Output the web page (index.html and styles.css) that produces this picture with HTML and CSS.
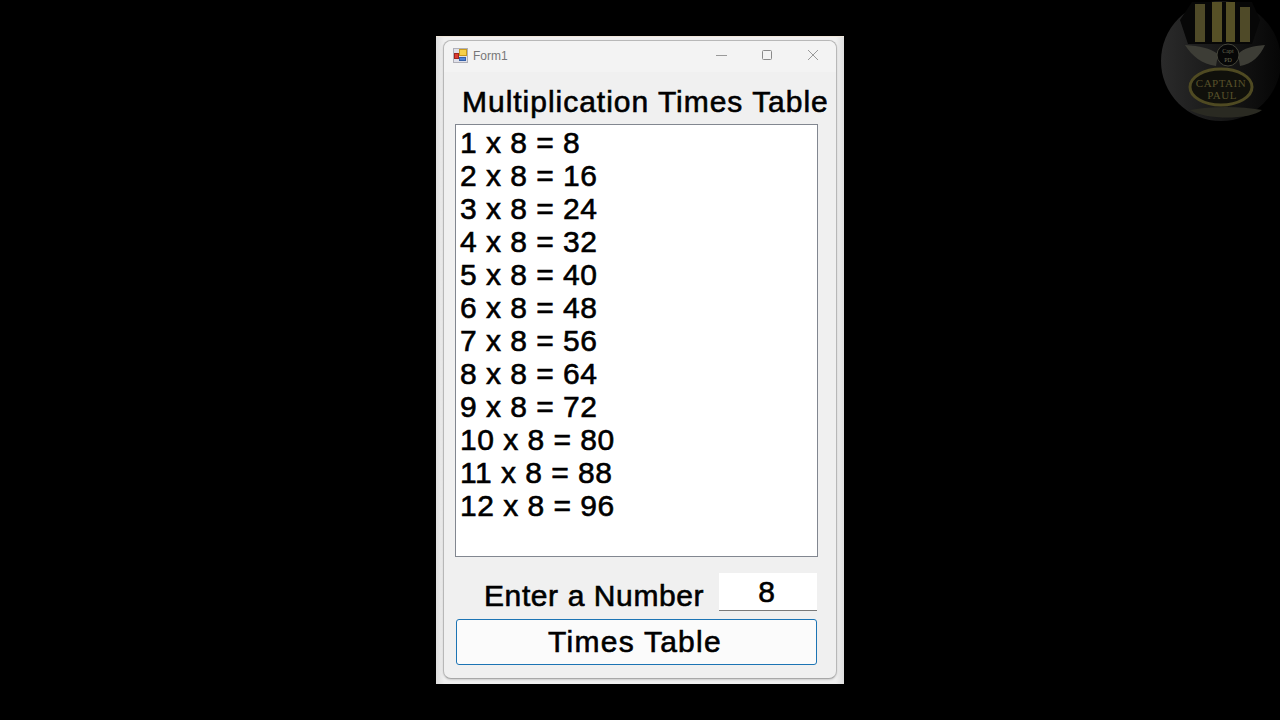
FILE: index.html
```html
<!DOCTYPE html>
<html lang="en">
<head>
    <meta charset="UTF-8">
    <title>Form1</title>
    <link rel="stylesheet" href="styles.css">
</head>
<body>
    <div class="frame">
        <div class="window">
            <div class="titlebar">
                <svg class="app-icon" width="15" height="15" viewBox="0 0 15 15">
                    <rect x="0.5" y="0.5" width="14" height="14" fill="#dfe0ea" stroke="#b0b0b8"/>
                    <rect x="6.5" y="1.5" width="7" height="6" fill="#f6d04a" stroke="#c99a1c"/>
                    <rect x="1.5" y="5.5" width="4" height="5" fill="#dc3a30" stroke="#9c2520"/>
                    <rect x="6.5" y="9.5" width="6" height="3" fill="#4f82d8" stroke="#3560a8"/>
                </svg>
                <span class="title">Form1</span>
                <div class="caption-buttons">
                    <svg width="12" height="12" viewBox="0 0 12 12"><path d="M1 6.5h11" stroke="#999" fill="none"/></svg>
                    <svg width="12" height="12" viewBox="0 0 12 12"><rect x="1.5" y="1.5" width="9" height="9" rx="1" stroke="#8a8a8a" fill="none"/></svg>
                    <svg width="12" height="12" viewBox="0 0 12 12"><path d="M1 1l10 10M11 1L1 11" stroke="#999" fill="none"/></svg>
                </div>
            </div>
            <div class="form-body">
                <div class="heading">Multiplication Times Table</div>
                <div class="listbox">
                    <div>1 x 8 = 8</div>
                    <div>2 x 8 = 16</div>
                    <div>3 x 8 = 24</div>
                    <div>4 x 8 = 32</div>
                    <div>5 x 8 = 40</div>
                    <div>6 x 8 = 48</div>
                    <div>7 x 8 = 56</div>
                    <div>8 x 8 = 64</div>
                    <div>9 x 8 = 72</div>
                    <div>10 x 8 = 80</div>
                    <div>11 x 8 = 88</div>
                    <div>12 x 8 = 96</div>
                </div>
                <div class="input-row">
                    <span class="input-label">Enter a Number</span>
                    <div class="number-box">8</div>
                </div>
                <button class="times-btn">Times Table</button>
            </div>
        </div>
    </div>

    <svg class="logo" width="120" height="122" viewBox="0 0 120 122">
        <defs>
            <linearGradient id="badge" x1="0" y1="0" x2="1" y2="0">
                <stop offset="0" stop-color="#2a2a2a"/>
                <stop offset="0.55" stop-color="#161616"/>
                <stop offset="1" stop-color="#060606"/>
            </linearGradient>
        </defs>
        <circle cx="61" cy="61" r="60" fill="url(#badge)"/>
        <path d="M20 20L32 2H92L100 20L92 44H28Z" fill="#070707"/>
        <rect x="35" y="4" width="10" height="38" fill="#4f4a28"/>
        <rect x="52" y="2" width="10" height="40" fill="#565026"/>
        <rect x="66" y="2" width="9" height="40" fill="#565026"/>
        <rect x="80" y="7" width="10" height="35" fill="#4f4a28"/>
        <path d="M25 45C40 46 50 48 58 54L56 66C42 64 32 56 25 45ZM105 45C92 46 84 48 78 54L80 66C92 64 100 56 105 45Z" fill="#3d3d36"/>
        <circle cx="68" cy="55" r="11" fill="#070707" stroke="#45453a"/>
        <text class="logo-small" x="68" y="53" text-anchor="middle">Capt</text>
        <text class="logo-small" x="68" y="62" text-anchor="middle">PD</text>
        <path d="M30 110C50 106 80 106 102 110C90 120 45 120 30 110Z" fill="#2a2a22"/>
        <ellipse cx="61" cy="87" rx="31" ry="18" fill="#10100b" stroke="#4f4a22" stroke-width="3"/>
        <text class="logo-text" x="61" y="87" text-anchor="middle">CAPTAIN</text>
        <text class="logo-text" x="62" y="99" text-anchor="middle">PAUL</text>
    </svg>
</body>
</html>
```
FILE: styles.css
```css
* {
    margin: 0;
    padding: 0;
    box-sizing: border-box;
}

body {
    background-color: #000;
    height: 720px;
    overflow: hidden;
    font-family: "Liberation Sans", Arial, sans-serif;
    -webkit-text-stroke: 0.6px currentColor;
}

.frame {
    width: 408px;
    height: 648px;
    margin: 36px 0 0 436px;
    padding: 4px 7px 5px 7px;
    background: linear-gradient(to right, #dedede, #f0f0f0 2%, #f0f0f0 98%, #dedede);
    box-shadow: inset 0 1px 0 #efe6da;
}

.window {
    height: 639px;
    background-color: #f0f0f0;
    border: 1px solid #b8b8b8;
    border-bottom-color: #a8a8a8;
    border-radius: 8px;
    box-shadow: 0 1px 2px rgba(0, 0, 0, 0.15);
}

.titlebar {
    display: flex;
    align-items: center;
    height: 31px;
    padding: 0 0 2px 9px;
    background-color: #f3f3f3;
    border-radius: 8px 8px 0 0;
}

.title {
    margin-left: 5px;
    font-size: 12px;
    color: #777;
    -webkit-text-stroke: 0;
}

.caption-buttons {
    display: flex;
    gap: 34px;
    margin: 0 17px 1px auto;
}

.form-body {
    padding: 13px 18px 0 11px;
}

.heading {
    margin-left: 7px;
    margin-right: -20px;
    font-size: 30px;
    letter-spacing: 0.98px;
    line-height: 34px;
    color: #000;
    white-space: nowrap;
}

.listbox {
    height: 433px;
    margin-top: 5px;
    padding: 1px 0 0 4px;
    background-color: #fff;
    border: 1px solid #828790;
    font-size: 30px;
    letter-spacing: 0.48px;
    line-height: 33px;
    color: #000;
}

.input-row {
    display: flex;
    align-items: flex-end;
    height: 38px;
    margin-top: 16px;
}

.input-label {
    width: 264px;
    margin-bottom: -2px;
    padding-left: 29px;
    font-size: 30px;
    letter-spacing: 0.6px;
    line-height: 34px;
    white-space: nowrap;
}

.number-box {
    width: 98px;
    height: 38px;
    padding-right: 3px;
    background-color: #fff;
    border-bottom: 1px solid #7a7a7a;
    font-size: 30px;
    line-height: 37px;
    text-align: center;
}

.times-btn {
    display: block;
    width: 361px;
    height: 46px;
    margin: 8px 0 0 1px;
    padding-right: 3px;
    background-color: #fbfbfb;
    border: 1px solid #1c74b4;
    border-radius: 3px;
    font-family: inherit;
    font-size: 30px;
    letter-spacing: 1.25px;
    color: #000;
}

.logo {
    position: absolute;
    top: 0;
    left: 1160px;
    -webkit-text-stroke: 0;
}

.logo-text {
    font-family: "Liberation Serif", serif;
    font-size: 11px;
    letter-spacing: 0.5px;
    fill: #57512a;
}

.logo-small {
    font-family: "Liberation Serif", serif;
    font-size: 6px;
    fill: #6a6a55;
}
```
